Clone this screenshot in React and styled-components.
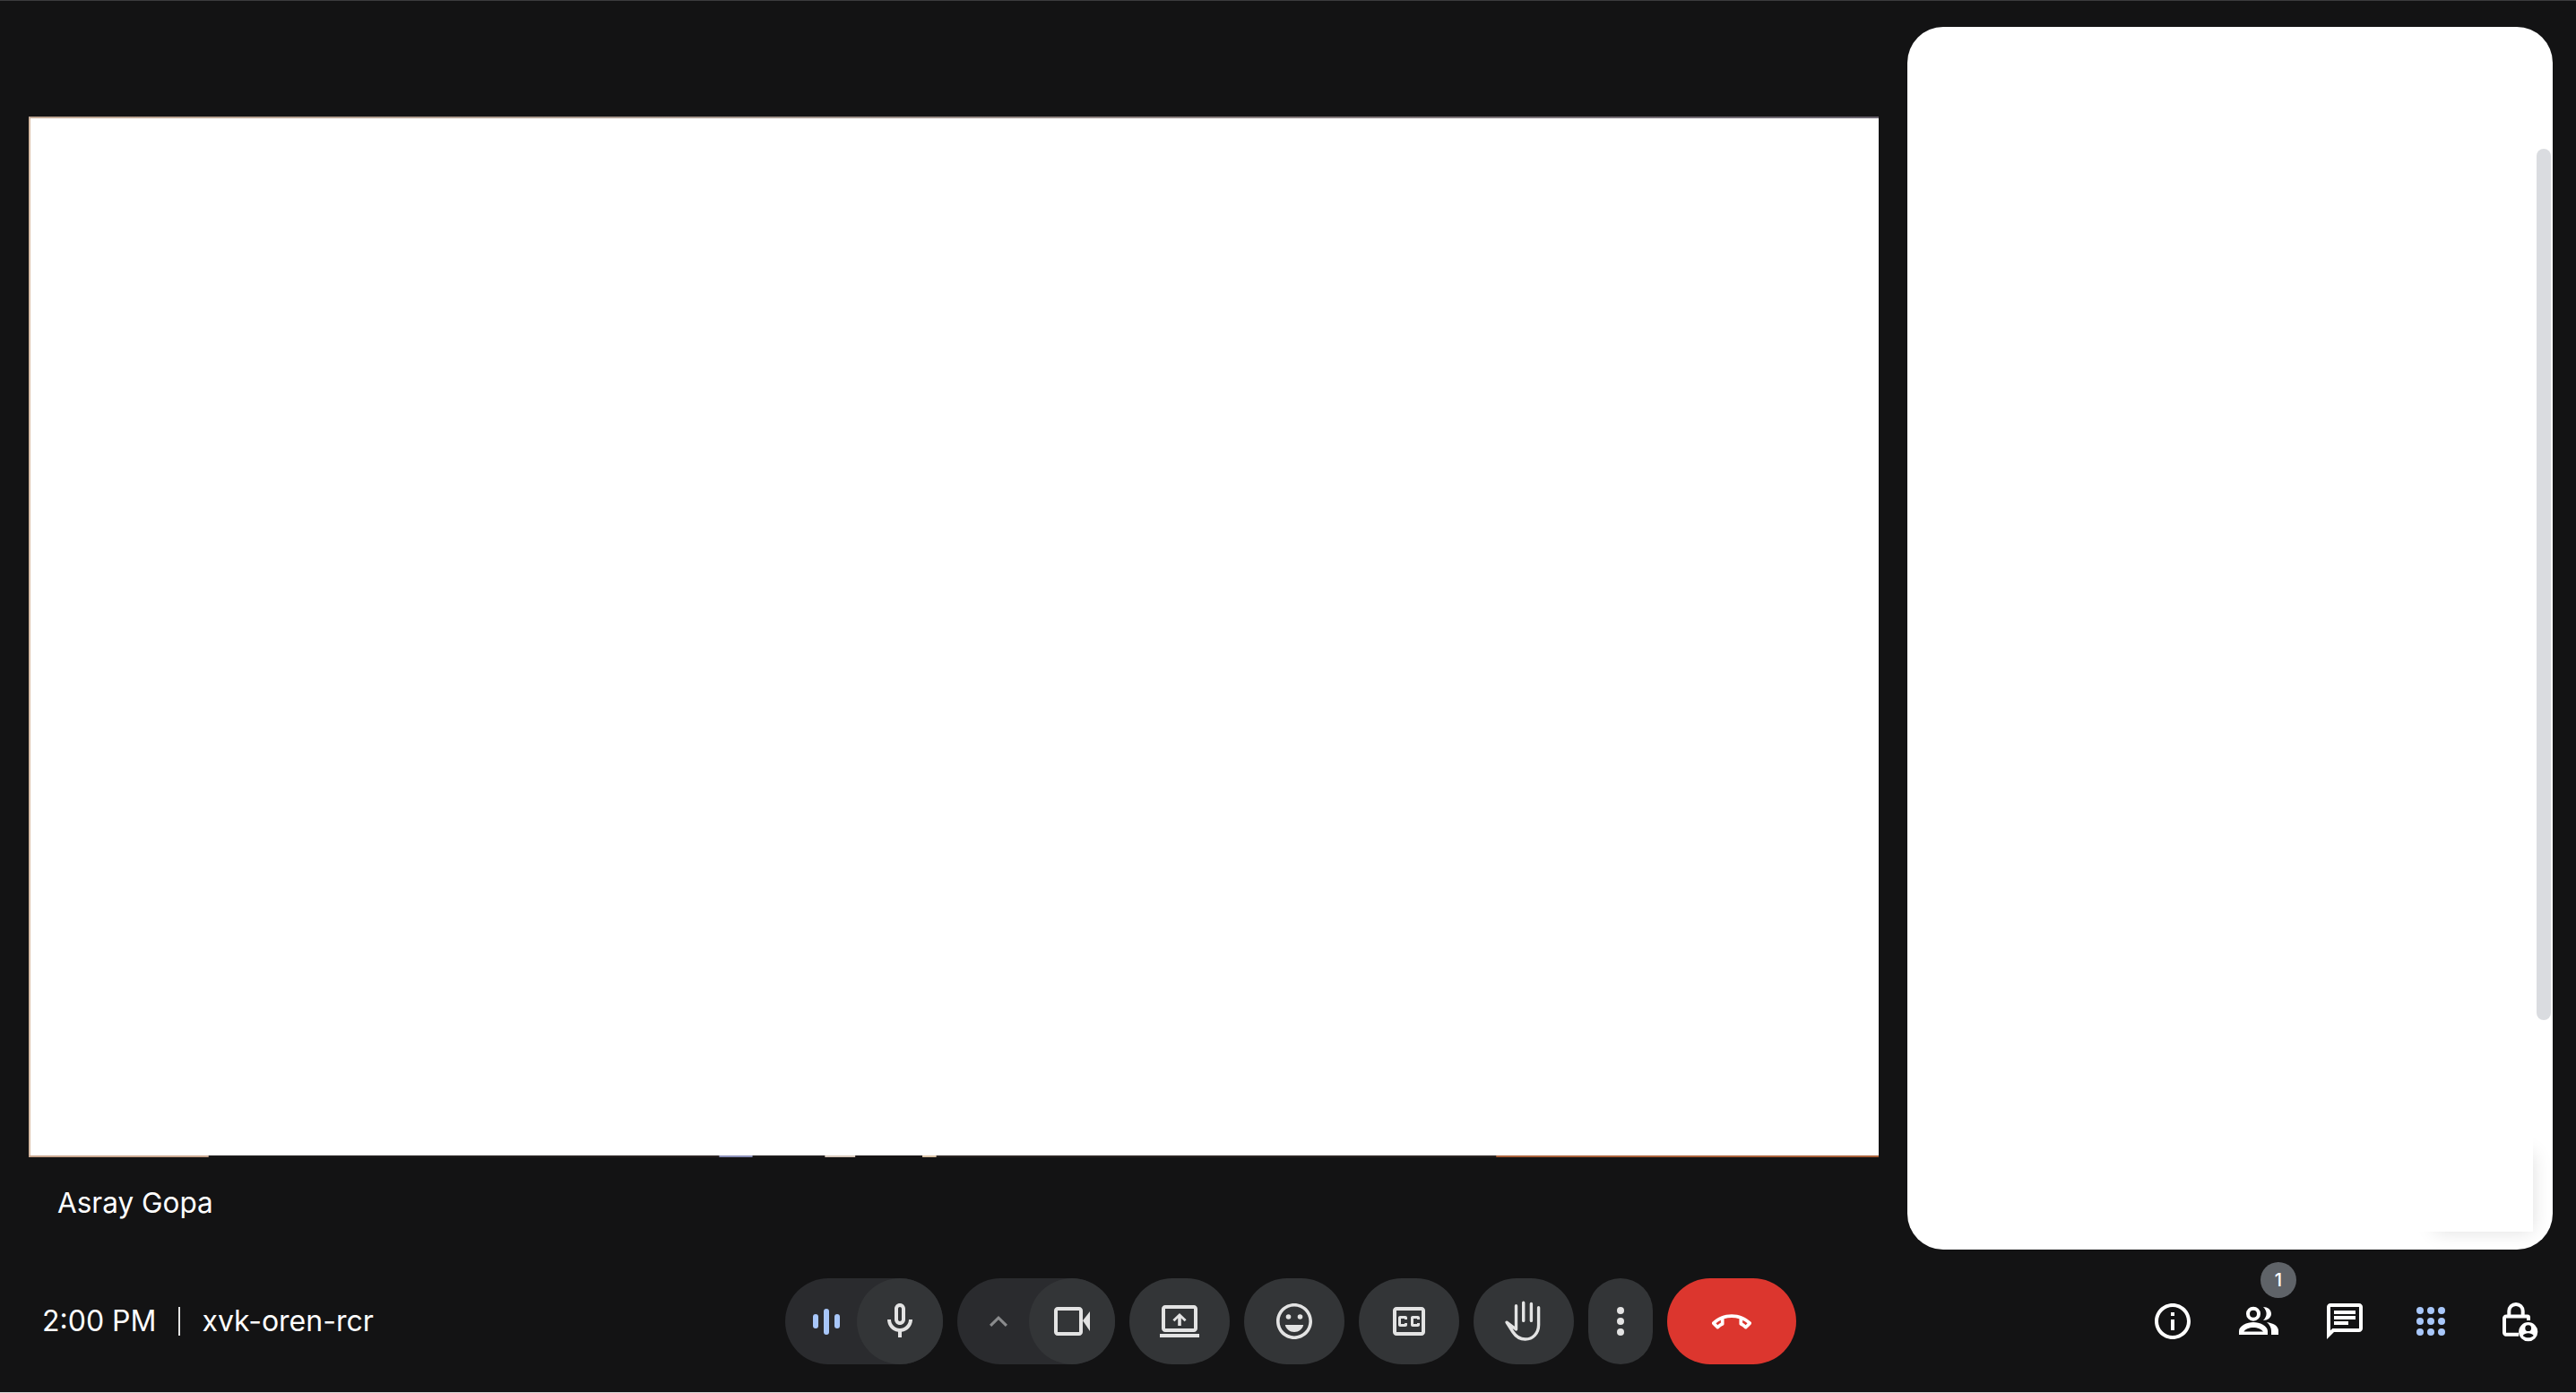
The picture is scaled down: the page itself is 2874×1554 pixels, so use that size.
import React from "react";
import styled, { createGlobalStyle } from "styled-components";

const Global = createGlobalStyle`
  html, body { margin: 0; padding: 0; background: #131314; }
  * { box-sizing: border-box; }
`;

const Page = styled.div`
  width: 2874px;
  height: 1554px;
  display: flex;
  flex-direction: column;
  background: #131314;
  border-top: 1px solid #3c3c3e;
  border-bottom: 1px solid #d8d8d8;
  font-family: "Inter", "Open Sans", sans-serif;
  color: #fff;
  overflow: hidden;
`;

const Main = styled.div`
  display: flex;
  height: 1393px;
  padding: 29px 26px 0 32px;
  gap: 32px;
`;

const Stage = styled.div`
  width: 2064px;
  padding-top: 100px;
  display: flex;
  flex-direction: column;
`;

const Frame = styled.div`
  height: 1161px;
  background: #fff;
  border-left: 2px solid #d8bca6;
  display: flex;
  flex-direction: column;
  justify-content: space-between;
`;

const FrameEdgeTop = styled.div`
  height: 2px;
  margin-left: -2px;
  background: linear-gradient(90deg, #c2aa97 0, #a89a92 40%, #6b6570 100%);
`;

const FrameEdge = styled.div`
  height: 2px;
  margin-left: -2px;
  background: linear-gradient(
    90deg,
    #c9a78f 0,
    #c9a78f 9.7%,
    #1b1a1a 9.75%,
    #2a2322 37.3%,
    #8b8fb8 37.35%,
    #8b8fb8 39.1%,
    #1f1c1c 39.15%,
    #1f1c1c 43%,
    #d8c8bb 43.07%,
    #d8c8bb 44.67%,
    #1a1516 44.7%,
    #1a1516 48.3%,
    #dcc4a8 48.33%,
    #dcc4a8 49.03%,
    #2b2422 49.1%,
    #2b2422 79.3%,
    #a9613a 79.35%,
    #a9613a 100%
  );
`;

const Name = styled.div`
  margin: 31px 0 0 32px;
  font-size: 31.5px;
  line-height: 40px;
  font-weight: 400;
`;

const Panel = styled.div`
  position: relative;
  width: 720px;
  height: 1364px;
  background: #fff;
  border-radius: 40px;
  overflow: hidden;
`;

const Scrollbar = styled.div`
  position: absolute;
  top: 136px;
  right: 2px;
  width: 16px;
  height: 972px;
  border-radius: 8px;
  background: #dadce0;
`;

const FloatCard = styled.div`
  position: absolute;
  right: 22px;
  bottom: 20px;
  width: 130px;
  height: 108px;
  background: #fff;
  box-shadow: 10px 10px 20px -10px rgba(0, 0, 0, 0.13);
`;

const Bar = styled.div`
  display: flex;
  align-items: center;
  height: 96px;
  margin-top: 32px;
`;

const Meeting = styled.div`
  width: 876px;
  padding-left: 47px;
  display: flex;
  align-items: center;
  font-size: 32px;
  line-height: 40px;
`;

const Divider = styled.span`
  width: 2px;
  height: 32px;
  margin: 0 24px 0 25px;
  background: #e3e3e3;
`;

const Controls = styled.div`
  display: flex;
  gap: 16px;
`;

const Group = styled.div`
  display: flex;
  width: 176px;
  height: 96px;
  border-radius: 48px;
  background: #2a2b2e;
`;

const GroupStart = styled.div`
  width: 80px;
  height: 96px;
  display: flex;
  align-items: center;
  justify-content: center;
  padding-left: 16px;
`;

const Round = styled.button`
  width: ${(p) => p.$w || 112}px;
  height: 96px;
  padding: 0;
  border: 0;
  border-radius: 48px;
  background: ${(p) => p.$bg || "#333537"};
  color: #e3e3e3;
  display: flex;
  align-items: center;
  justify-content: center;
`;

const Aside = styled.div`
  flex: 1;
  display: flex;
  justify-content: flex-end;
  padding-right: 18px;
`;

const IconButton = styled.button`
  position: relative;
  width: 96px;
  height: 96px;
  padding: 0;
  border: 0;
  background: transparent;
  color: #fff;
  display: flex;
  align-items: center;
  justify-content: center;
`;

const Badge = styled.span`
  position: absolute;
  top: -18px;
  left: 50px;
  width: 40px;
  height: 40px;
  border-radius: 50%;
  background: #5f6368;
  color: #fff;
  font-size: 20px;
  line-height: 40px;
  font-weight: 500;
  text-align: center;
  font-family: "Inter", sans-serif;
`;

const Icon = ({ children, size = 48, color = "currentColor" }) => (
  <svg width={size} height={size} viewBox="0 0 24 24" fill={color}>
    {children}
  </svg>
);

const App = () => (
  <>
    <Global />
    <Page>
      <Main>
        <Stage>
          <Frame>
            <FrameEdgeTop />
            <FrameEdge />
          </Frame>
          <Name>Asray Gopa</Name>
        </Stage>
        <Panel>
          <Scrollbar />
          <FloatCard />
        </Panel>
      </Main>
      <Bar>
        <Meeting>
          <span>2:00 PM</span>
          <Divider />
          <span>xvk-oren-rcr</span>
        </Meeting>
        <Controls>
          <Group>
            <GroupStart>
              <Icon color="#a8c7fa">
                <rect x="3.5" y="8" width="3" height="8" rx="1.5" />
                <rect x="9.5" y="5" width="3" height="14.500" rx="1.5" />
                <rect x="15.5" y="8" width="3" height="8" rx="1.5" />
              </Icon>
            </GroupStart>
            <Round $w={96}>
              <Icon>
                <path d="M12 14c1.66 0 3-1.34 3-3V5c0-1.66-1.34-3-3-3S9 3.34 9 5v6c0 1.66 1.34 3 3 3zm-1-9c0-.55.45-1 1-1s1 .45 1 1v6c0 .55-.45 1-1 1s-1-.45-1-1V5zm6 6c0 2.76-2.24 5-5 5s-5-2.24-5-5H5c0 3.53 2.61 6.43 6 6.92V21h2v-3.08c3.39-.49 6-3.39 6-6.92h-2z" />
              </Icon>
            </Round>
          </Group>
          <Group>
            <GroupStart>
              <Icon color="#8a8b8d">
                <path d="M11 9L6 13.900 7.100 15 11 11.100 14.900 15 16 13.900z" />
              </Icon>
            </GroupStart>
            <Round $w={96}>
              <Icon>
                <path d="M4 4h12c1.100 0 2 .9 2 2v12c0 1.100-.9 2-2 2H4c-1.100 0-2-.9-2-2V6c0-1.100.9-2 2-2zm0 2v12h12V6H4z" fillRule="evenodd" />
                <path d="M18 11.600l4-5.100v11z" />
              </Icon>
            </Round>
          </Group>
          <Round>
            <Icon>
              <path d="M4 3h16c1.100 0 2 .9 2 2v11c0 1.100-.9 2-2 2H4c-1.100 0-2-.9-2-2V5c0-1.100.9-2 2-2zm0 2v11h16V5H4z" fillRule="evenodd" />
              <path d="M1 19h22v2H1z" />
              <path d="M12 7.500l3.800 3.600-1 1-1.900-1.800v4.200h-1.800v-4.200l-1.900 1.800-1-1z" />
            </Icon>
          </Round>
          <Round>
            <Icon>
              <path fillRule="evenodd" d="M12 2C6.480 2 2 6.480 2 12s4.480 10 10 10 10-4.480 10-10S17.520 2 12 2zm0 18.200c-4.520 0-8.200-3.680-8.200-8.200S7.480 3.800 12 3.800s8.200 3.680 8.200 8.200-3.680 8.200-8.200 8.200z" />
              <circle cx="8.750" cy="9.500" r="1.400" />
              <circle cx="15.250" cy="9.500" r="1.400" />
              <path d="M6.900 14h10.200c-.5 2.300-2.600 4-5.100 4s-4.600-1.700-5.100-4z" />
            </Icon>
          </Round>
          <Round>
            <Icon>
              <path d="M19 4H5c-1.110 0-2 .9-2 2v12c0 1.100.89 2 2 2h14c1.100 0 2-.9 2-2V6c0-1.100-.9-2-2-2zm0 14H5V6h14v12zM7 15h3c.55 0 1-.45 1-1v-1H9.500v.5h-2v-3h2v.5H11v-1c0-.55-.45-1-1-1H7c-.55 0-1 .45-1 1v4c0 .55.45 1 1 1zm7 0h3c.55 0 1-.45 1-1v-1h-1.500v.5h-2v-3h2v.5H18v-1c0-.55-.45-1-1-1h-3c-.55 0-1 .45-1 1v4c0 .55.45 1 1 1z" />
            </Icon>
          </Round>
          <Round>
            <Icon color="none">
              <path
                d="M7.750 16.500V3.400M11.850 11.700V1.600M16.200 11.700V2.200M20.300 4.400V14C20.300 18.800 17 22 12.850 22 9.500 22 7.500 20.300 6 18L2.500 12.600 7.750 16.500"
                stroke="currentColor"
                strokeWidth="1.700"
                strokeLinecap="round"
                strokeLinejoin="round"
              />
            </Icon>
          </Round>
          <Round $w={72}>
            <Icon>
              <circle cx="12" cy="6" r="2" />
              <circle cx="12" cy="12" r="2" />
              <circle cx="12" cy="18" r="2" />
            </Icon>
          </Round>
          <Round $w={144} $bg="#dc362e">
            <Icon color="#fff">
              <path
                transform="translate(12 12.250) scale(.92) translate(-12 -11.500)"
                d="M18.590 10.520c1.050.51 2.040 1.150 2.960 1.910l-1.070 1.070c-.58-.47-1.210-.89-1.880-1.270v-1.710m-13.200 0v1.700c-.65.37-1.280.79-1.870 1.270l-1.070-1.070c.91-.75 1.900-1.380 2.940-1.900M12 7C7.460 7 3.340 8.780.29 11.670c-.18.18-.29.43-.29.71s.11.53.29.71l2.480 2.480c.18.18.43.29.71.29.27 0 .52-.11.7-.28.79-.74 1.690-1.360 2.660-1.850.33-.16.56-.5.56-.9v-3.100C8.850 9.250 10.400 9 12 9s3.150.25 4.590.73v3.100c0 .39.23.74.56.9.98.49 1.870 1.120 2.670 1.850.18.18.43.28.7.28.28 0 .53-.11.71-.29l2.480-2.480c.18-.18.29-.43.29-.71s-.11-.53-.29-.71C20.660 8.780 16.540 7 12 7z"
              />
            </Icon>
          </Round>
        </Controls>
        <Aside>
          <IconButton>
            <Icon>
              <path d="M11 7h2v2h-2zm0 4h2v6h-2zm1-9C6.480 2 2 6.480 2 12s4.480 10 10 10 10-4.480 10-10S17.520 2 12 2zm0 18c-4.410 0-8-3.590-8-8s3.590-8 8-8 8 3.590 8 8-3.590 8-8 8z" />
            </Icon>
          </IconButton>
          <IconButton>
            <Badge>1</Badge>
            <Icon>
              <path fillRule="evenodd" d="M9 3.850a4 4 0 1 1 0 8 4 4 0 0 1 0-8zm0 2a2 2 0 1 0 0 4 2 2 0 0 0 0-4z" />
              <path fillRule="evenodd" d="M1 19.500V17.500C1 14.500 5.500 12.500 9 12.500s8 2 8 5v2H1zM3.700 17.800h10.800c-.8-1.300-3.200-2.300-5.500-2.300s-4.700 1-5.300 2.300z" />
              <path d="M14.500 4C17 4 19 5.500 19 7.800s-2 3.700-4.500 3.700c1.200-1.200 1.800-2.300 1.800-3.700S15.700 5.200 14.500 4z" />
              <path d="M16.500 12.500C20 13 23 14.500 23 17.300v2.200h-4v-2.200c0-1.800-1-3.500-2.500-4.800z" />
            </Icon>
          </IconButton>
          <IconButton>
            <Icon>
              <path d="M20 2H4c-1.100 0-2 .9-2 2v18l4-4h14c1.100 0 2-.9 2-2V4c0-1.100-.9-2-2-2zm0 14H5.170L4 17.170V4h16v12zM6 12h8v2H6zm0-3h12v2H6zm0-3h12v2H6z" />
            </Icon>
          </IconButton>
          <IconButton>
            <Icon color="#a8c7fa">
              {[6, 12, 18].flatMap((y) =>
                [6, 12, 18].map((x) => <circle key={`${x}-${y}`} cx={x} cy={y} r="2" />)
              )}
            </Icon>
          </IconButton>
          <IconButton>
            <Icon>
              <path fillRule="evenodd" d="M6.650 8.300V6.300a4.850 4.850 0 0 1 9.700 0v2H18c.9 0 1.500.6 1.500 1.500v1.700h-2v-1.200H6v8.100h7v2H6c-1.100 0-2-.9-2-2v-8.100c0-1.100.9-2 2-2h.65zm2 0h5.700v-2a2.850 2.850 0 0 0-5.700 0v2z" />
              <path fillRule="evenodd" d="M18.350 12.550a5.300 5.300 0 1 1 0 10.600 5.300 5.300 0 0 1 0-10.600zm0 1.600a1.700 1.700 0 1 0 0 3.400 1.700 1.700 0 0 0 0-3.400zm-3 5.800c.8.700 1.900 1.200 3 1.200s2.200-.5 3-1.200c-.6-.8-1.800-1.300-3-1.300s-2.400.5-3 1.300z" />
            </Icon>
          </IconButton>
        </Aside>
      </Bar>
    </Page>
  </>
);

export default App;
